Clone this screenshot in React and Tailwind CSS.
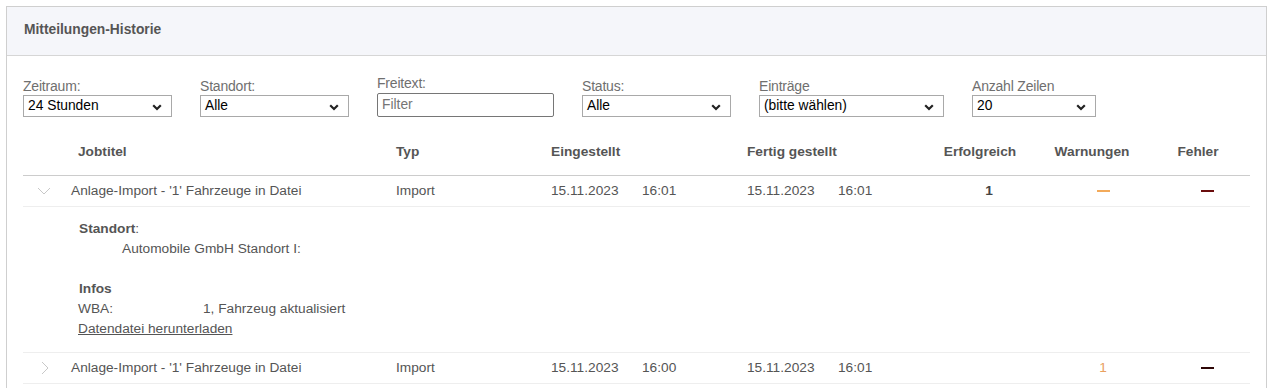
import React from "react";

const Chevron = () => (
  <svg width="10" height="7" viewBox="0 0 10 7" className="absolute right-[9px] top-[8px]">
    <path d="M1.2 1.2 L5 5 L8.8 1.2" fill="none" stroke="#222" strokeWidth="2.2" />
  </svg>
);

function Select({ label, value, w }) {
  return (
    <div className="flex flex-col" style={{ width: w }}>
      <span className="text-[14px] leading-[16px] text-[#6f6f6f] mb-[1px] tracking-[-0.2px]">{label}</span>
      <div className="relative h-[22px] border border-[#a9a9a9] bg-white">
        <span className="absolute left-[4px] top-[2px] text-[13.8px] leading-[16px] text-black">{value}</span>
        <Chevron />
      </div>
    </div>
  );
}

function Row({ open, warn, dashColor }) {
  return (
    <div className="grid grid-cols-[48px_325px_155px_196px_189px_106px_122px_86px] h-[31px] items-center border-b border-[#eeeeee] text-[13.7px] text-[#555]">
      <div className="flex justify-center pr-[6px]">
        {open ? (
          <svg width="14" height="8" viewBox="0 0 14 8"><path d="M1 1 L7 7 L13 1" fill="none" stroke="#c8c8c8" strokeWidth="1" /></svg>
        ) : (
          <svg width="8" height="14" viewBox="0 0 8 14" className="ml-[2px]"><path d="M1 1 L7 7 L1 13" fill="none" stroke="#c8c8c8" strokeWidth="1" /></svg>
        )}
      </div>
      <div>Anlage-Import - '1' Fahrzeuge in Datei</div>
      <div>Import</div>
      <div><span className="inline-block w-[91px]">15.11.2023</span>{open ? "16:01" : "16:00"}</div>
      <div><span className="inline-block w-[91px]">15.11.2023</span>16:01</div>
      <div className="text-center font-bold text-[#444]">{open ? "1" : ""}</div>
      <div className="flex justify-center">
        {warn === "dash" ? <div className="w-[13px] h-[2px] bg-[#f3aa5a]" /> : <span className="text-[#e9a05f]">1</span>}
      </div>
      <div className="flex justify-center">
        <div className="w-[13px] h-[2px]" style={{ background: dashColor }} />
      </div>
    </div>
  );
}

export default function App() {
  return (
    <div className="bg-white h-[388px] overflow-hidden pt-[6px] pl-[6px]" style={{ fontFamily: '"Liberation Sans", Arial, sans-serif' }}>
      <div className="w-[1261px] border border-[#cfcfcf] h-[400px]">
        <div className="h-[49px] bg-[#f5f6fa] border-b border-[#d6d6d6] flex items-center pl-[17px] pb-[1px]">
          <span className="text-[13.8px] font-bold text-[#555]">Mitteilungen-Historie</span>
        </div>
        <div className="pl-[16px] pr-[10px]">
          <div className="flex items-end gap-[28px] pt-[19px]">
            <Select label="Zeitraum:" value="24 Stunden" w={149} />
            <Select label="Standort:" value="Alle" w={149} />
            <div className="flex flex-col w-[177px]">
              <span className="text-[14px] leading-[16px] text-[#6f6f6f] mb-[2px] tracking-[-0.2px]">Freitext:</span>
              <div className="h-[24px] border border-[#767676] rounded-[2px] flex items-center pl-[4px] text-[13.8px] text-[#757575]">Filter</div>
            </div>
            <Select label="Status:" value="Alle" w={149} />
            <Select label="Einträge" value="(bitte wählen)" w={185} />
            <Select label="Anzahl Zeilen" value="20" w={124} />
          </div>

          <div className="w-[1227px]">
            <div className="grid grid-cols-[48px_325px_155px_196px_189px_106px_122px_86px] pt-[27px] pb-[15px] leading-[16px] border-b border-[#cccccc] text-[13.7px] font-bold text-[#555]">
              <div />
              <div className="pl-[7px]">Jobtitel</div>
              <div>Typ</div>
              <div>Eingestellt</div>
              <div>Fertig gestellt</div>
              <div className="text-center pr-[18px]">Erfolgreich</div>
              <div className="text-center pr-[22px]">Warnungen</div>
              <div className="text-center pr-[18px]">Fehler</div>
            </div>
            <Row open warn="dash" dashColor="#6a0d0d" />
            <div className="border-b border-[#eeeeee] pl-[56px] pt-[12px] pb-[13px] text-[13.7px] leading-[20px] text-[#555]">
              <div><span className="font-bold">Standort</span>:</div>
              <div className="pl-[43px]">Automobile GmbH Standort I:</div>
              <div className="mt-[20px] font-bold">Infos</div>
              <div className="-ml-[1px]"><span className="inline-block w-[125px]">WBA:</span>1, Fahrzeug aktualisiert</div>
              <div className="-ml-[1px]"><span className="underline">Datendatei herunterladen</span></div>
            </div>
            <Row open={false} warn="one" dashColor="#2e0606" />
          </div>
        </div>
      </div>
    </div>
  );
}
